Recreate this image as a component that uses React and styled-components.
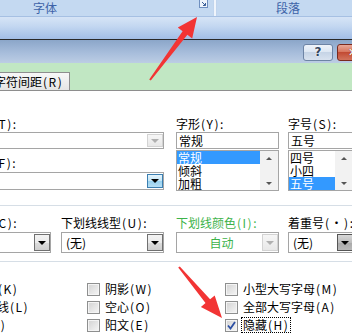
import React from 'react';
import styled, { createGlobalStyle } from 'styled-components';

const GlobalStyle = createGlobalStyle`
  html, body {
    margin: 0;
    padding: 0;
    background: #fff;
  }
  body {
    font-family: "Noto Sans CJK SC", "Liberation Sans", sans-serif;
    font-size: 12px;
    color: #000;
  }
`;

const Screen = styled.div`
  position: relative;
  width: 352px;
  height: 335px;
  overflow: hidden;
  background: #fff;
`;

/* 리본 */
const Ribbon = styled.div`
  display: flex;
  flex-direction: column;
  border-bottom: 1px solid #2a2a2a;
`;

const GroupRow = styled.div`
  display: flex;
  height: 16px;
  background: #c4d9f1;
  border-bottom: 1px solid #a6c0e3;
`;

const Group = styled.div`
  position: relative;
  flex: none;
  width: ${p => p.$w}px;
  margin-left: ${p => p.$offset || 0}px;
  display: flex;
  align-items: center;
  justify-content: center;
  color: #3d63a8;
  font-size: 12px;
  line-height: 16px;
`;

const GroupDivider = styled.div`
  flex: none;
  width: 4px;
  background: linear-gradient(to right, #a9c4e6, #f4f8fd 40%, #f4f8fd 60%, #a9c4e6);
`;

const Launcher = styled.svg`
  position: absolute;
  right: 5px;
  top: 0;
`;

const RibbonFoot = styled.div`
  height: 22px;
  background: linear-gradient(#d6e4f6, #c4d8f1 40%, #a2bee7);
`;

/* 제목 표시줄 */
const TitleBar = styled.div`
  display: flex;
  justify-content: flex-end;
  align-items: center;
  gap: 4px;
  height: 23px;
  box-sizing: border-box;
  padding-top: 1px;
  margin-right: -16px;
  background: linear-gradient(#8ba6c9, #a7bddb 55%, #bccde4);
`;

const CaptionButton = styled.div`
  flex: none;
  width: ${p => p.$w}px;
  height: 17px;
  box-sizing: border-box;
  border: 1px solid ${p => (p.$close ? '#7a2a1e' : '#6d84a5')};
  border-radius: 3px;
  background: ${p =>
    p.$close
      ? 'linear-gradient(#e9a898, #d7765f 45%, #c24b34 50%, #d2735c)'
      : 'linear-gradient(#eef3fa, #dde7f3 45%, #c6d4e6 50%, #d8e2ef)'};
  display: flex;
  align-items: center;
  justify-content: center;
  font-family: "DejaVu Sans", sans-serif;
  font-weight: bold;
  font-size: ${p => (p.$close ? 11 : 12)}px;
  color: ${p => (p.$close ? '#fff' : '#33465f')};
  text-shadow: ${p => (p.$close ? '0 0 1px #5a1a10' : '0 0 2px #fff, 0 0 1px #fff')};
`;

/* 탭 */
const TabStrip = styled.div`
  display: flex;
  align-items: flex-end;
  height: 27px;
  background: #c1e7c3;
  border-bottom: 1px solid #8e8e8e;
`;

const Tab = styled.div`
  margin-left: -14px;
  height: 18px;
  box-sizing: border-box;
  padding: 0 0 0 7px;
  width: 84px;
  border: 1px solid #8e8e8e;
  border-bottom: none;
  background: linear-gradient(#f7f7f7, #e5e5e5);
  line-height: 17px;
  white-space: nowrap;
`;

const Key = styled.span`
  letter-spacing: 1.5px;
  margin-left: 1px;
`;

/* 본문 */
const Body = styled.div`
  width: 420px;
  margin-left: -56px;
  padding-top: 26px;
`;

const FontGrid = styled.div`
  display: grid;
  grid-template-columns: 232px 112px 80px;
`;

const Stack = styled.div`
  display: flex;
  flex-direction: column;
`;

const FieldLabel = styled.div`
  height: 14px;
  line-height: 14px;
  white-space: nowrap;
  color: ${p => (p.$green ? '#3db34a' : '#000')};
  margin-top: ${p => p.$top || 0}px;
  margin-bottom: ${p => (p.$bottom === undefined ? 1 : p.$bottom)}px;
`;

const tones = {
  off: { border: '#d3d3d3', bg: 'linear-gradient(#f6f6f6, #e8e8e8)', arrow: '#b0b0b0' },
  hot: { border: '#3c7fb1', bg: 'linear-gradient(#e5f4fc, #c4e5f6 50%, #98d1ef 51%, #b6dff5)', arrow: '#000' },
  plain: { border: '#707070', bg: 'linear-gradient(#f3f3f3, #ebebeb 50%, #dcdcdc 51%, #cfcfcf)', arrow: '#000' },
  dark: { border: '#555', bg: 'linear-gradient(#d8d8d8, #bdbdbd 50%, #a9a9a9 51%, #b9b9b9)', arrow: '#000' },
};

const Combo = styled.div`
  display: flex;
  width: ${p => p.$w}px;
  height: ${p => p.$h || 21}px;
  box-sizing: border-box;
  border: 1px solid #a5a5a5;
  background: #fff;
`;

const ComboText = styled.span`
  flex: 1;
  padding-left: 4px;
  display: flex;
  align-items: center;
  justify-content: ${p => (p.$center ? 'center' : 'flex-start')};
  color: ${p => (p.$green ? '#3db34a' : '#000')};
  white-space: nowrap;
`;

const DropButton = styled.span`
  position: relative;
  flex: none;
  width: 16px;
  margin: 1px 0 1px 0;
  box-sizing: border-box;
  border: 1px solid ${p => tones[p.$tone].border};
  background: ${p => tones[p.$tone].bg};
  &::after {
    content: '';
    position: absolute;
    left: 50%;
    top: 50%;
    margin: -2px 0 0 -4px;
    border-left: 4px solid transparent;
    border-right: 4px solid transparent;
    border-top: 4px solid ${p => tones[p.$tone].arrow};
  }
`;

const TextInput = styled.div`
  width: ${p => p.$w}px;
  height: 17px;
  box-sizing: border-box;
  border: 1px solid #a5a5a5;
  padding-left: 2px;
  line-height: 15px;
`;

const ListBox = styled.div`
  display: flex;
  width: ${p => p.$w}px;
  height: 41px;
  margin-top: 1px;
  box-sizing: border-box;
  border: 1px solid #a5a5a5;
`;

const Items = styled.div`
  flex: 1;
  display: flex;
  flex-direction: column;
`;

const Item = styled.div`
  height: 13px;
  line-height: 13px;
  padding-left: 1px;
  background: ${p => (p.$selected ? '#3399ff' : 'transparent')};
  color: ${p => (p.$selected ? '#fff' : '#000')};
`;

const ScrollBar = styled.div`
  flex: none;
  width: 18px;
  display: flex;
  flex-direction: column;
  justify-content: space-between;
  align-items: center;
  padding: 6px 0 5px;
  box-sizing: border-box;
  background: #f2f2f2;
`;

const ScrollArrow = styled.span`
  width: 0;
  height: 0;
  border-left: 3px solid transparent;
  border-right: 3px solid transparent;
  ${p => (p.$up ? 'border-bottom' : 'border-top')}: 3px solid #555;
`;

const Separator = styled.div`
  height: 1px;
  margin-top: ${p => p.$top}px;
  background: #d6dee6;
`;

const UnderlineGrid = styled.div`
  display: grid;
  grid-template-columns: 117px 115px 112px 80px;
  padding-top: 10px;
`;

const EffectsGrid = styled.div`
  display: grid;
  grid-template-columns: 144px 138px 138px;
  grid-template-rows: repeat(3, 18px);
  grid-auto-flow: column;
  margin-left: -1px;
  padding-top: 18px;
`;

const Check = styled.div`
  display: flex;
  align-items: center;
  white-space: nowrap;
`;

const Box = styled.span`
  flex: none;
  width: 13px;
  height: 13px;
  box-sizing: border-box;
  border: 1px solid #8e8f8f;
  background: linear-gradient(135deg, #d2d2d2, #f6f6f6);
  box-shadow: inset 0 0 0 1px #f4f4f4;
  display: flex;
  align-items: center;
  justify-content: center;
`;

const CheckText = styled.span`
  margin-left: 3px;
  line-height: 14px;
  padding: 0 1px;
  border: 1px dotted ${p => (p.$focus ? '#000' : 'transparent')};
`;

const Overlay = styled.svg`
  position: absolute;
  left: 0;
  top: 0;
  pointer-events: none;
`;

const Dropdown = ({ w, h, tone, text, green, center }) => (
  <Combo $w={w} $h={h}>
    <ComboText $green={green} $center={center}>{text}</ComboText>
    <DropButton $tone={tone} />
  </Combo>
);

const List = ({ w, items, selected }) => (
  <ListBox $w={w}>
    <Items>
      {items.map(it => (
        <Item key={it} $selected={it === selected}>{it}</Item>
      ))}
    </Items>
    <ScrollBar>
      <ScrollArrow $up />
      <ScrollArrow />
    </ScrollBar>
  </ListBox>
);

const effects = [
  ['删除线', '(K)'],
  ['双删除线', '(L)'],
  ['上标', '(P)'],
  ['阴影', '(W)'],
  ['空心', '(O)'],
  ['阳文', '(E)'],
  ['小型大写字母', '(M)'],
  ['全部大写字母', '(A)'],
  ['隐藏', '(H)'],
];

export default function App() {
  return (
    <Screen>
      <GlobalStyle />
      <Ribbon>
        <GroupRow>
          <Group $w={336} $offset={-123}>
            字体
            <Launcher width="9" height="8" viewBox="0 0 9 8">
              <rect x="0.5" y="-1" width="8" height="8.5" fill="#eef4fb" stroke="#6f8fbf" />
              <path d="M3 2 L6.5 5.5 M6.5 3 V5.5 H4" fill="none" stroke="#3b5f98" strokeWidth="1" />
            </Launcher>
          </Group>
          <GroupDivider />
          <Group $w={142}>段落</Group>
        </GroupRow>
        <RibbonFoot />
      </Ribbon>

      <TitleBar>
        <CaptionButton $w={30}>?</CaptionButton>
        <CaptionButton $w={31} $close>✕</CaptionButton>
      </TitleBar>

      <TabStrip>
        <Tab>字符间距<Key>(R)</Key></Tab>
      </TabStrip>

      <Body>
        <FontGrid>
          <Stack>
            <FieldLabel>中文字体<Key>(T)</Key>:</FieldLabel>
            <Dropdown w={220} h={17} tone="off" text="" />
            <FieldLabel $top={7} $bottom={2}>西文字体<Key>(F)</Key>:</FieldLabel>
            <Dropdown w={220} h={18} tone="hot" text="" />
          </Stack>
          <Stack>
            <FieldLabel>字形<Key>(Y)</Key>:</FieldLabel>
            <TextInput $w={103}>常规</TextInput>
            <List w={103} items={['常规', '倾斜', '加粗']} selected="常规" />
          </Stack>
          <Stack>
            <FieldLabel>字号<Key>(S)</Key>:</FieldLabel>
            <TextInput $w={66}>五号</TextInput>
            <List w={66} items={['四号', '小四', '五号']} selected="五号" />
          </Stack>
        </FontGrid>

        <Separator $top={14} />

        <UnderlineGrid>
          <Stack>
            <FieldLabel $bottom={2}>字体颜色<Key>(C)</Key>:</FieldLabel>
            <Dropdown w={107} tone="plain" text="自动" />
          </Stack>
          <Stack>
            <FieldLabel $bottom={2}>下划线线型<Key>(U)</Key>:</FieldLabel>
            <Dropdown w={103} tone="plain" text="(无)" />
          </Stack>
          <Stack>
            <FieldLabel $bottom={2} $green>下划线颜色<Key>(I)</Key>:</FieldLabel>
            <Dropdown w={103} tone="off" text="自动" green center />
          </Stack>
          <Stack>
            <FieldLabel $bottom={2}>着重号<Key>(·)</Key>:</FieldLabel>
            <Dropdown w={66} tone="dark" text="(无)" />
          </Stack>
        </UnderlineGrid>

        <Separator $top={8} />

        <EffectsGrid>
          {effects.map(([name, key]) => {
            const on = name === '隐藏';
            return (
              <Check key={name}>
                <Box>
                  {on && (
                    <svg width="9" height="9" viewBox="0 0 9 9">
                      <path d="M1 4.5 L3.5 7.5 L8 1" fill="none" stroke="#2c4fa3" strokeWidth="1.8" />
                    </svg>
                  )}
                </Box>
                <CheckText $focus={on}>
                  {name}
                  <Key>{key}</Key>
                </CheckText>
              </Check>
            );
          })}
        </EffectsGrid>
      </Body>

      <Overlay width="352" height="335" viewBox="0 0 352 335">
        <polygon
          fill="#f23434"
          points="149.2,79.4 182.6,31.2 177.8,27.6 197,17 192.2,38.4 187.4,34.8 150.8,80.6"
        />
        <polygon
          fill="#f23434"
          points="178.2,267.6 205.5,303.1 200.9,307 222,318 214.7,295.4 210.1,299.3 179.8,266.4"
        />
      </Overlay>
    </Screen>
  );
}
